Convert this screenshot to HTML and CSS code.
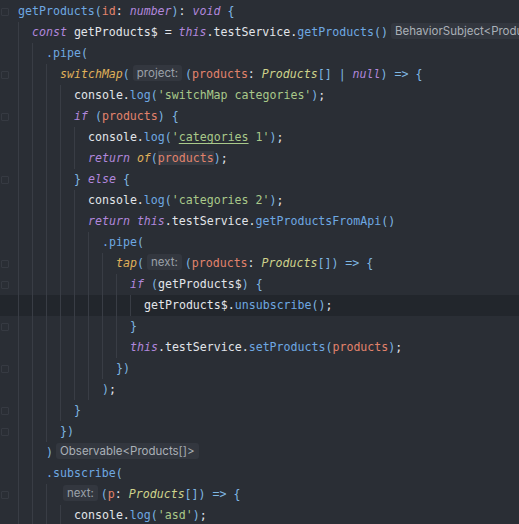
FILE: index.html
```html
<!DOCTYPE html>
<html lang="en">
<head>
    <meta charset="UTF-8">
    <title>product.component.ts</title>
    <link rel="stylesheet" href="styles.css">
</head>
<body>
    <div class="editor">
        <div class="line"><span class="gutter"><b class="fold"></b></span><span class="code"><span class="fn">getProducts</span><span class="br">(</span><span class="prm">id</span>: <span class="kw">number</span><span class="br">)</span>: <span class="kw">void</span> <span class="br">{</span></span></div>
        <div class="line"><span class="gutter"></span><i class="ind"></i><span class="code"><span class="kw">const</span> getProducts$ = <span class="kw">this</span>.testService.<span class="fn">getProducts</span><span class="br">()</span><span class="hint plain">BehaviorSubject&lt;Products[]&gt;</span></span></div>
        <div class="line"><span class="gutter"></span><i class="ind"></i><i class="ind"></i><span class="code"><span class="fn">.pipe</span><span class="br">(</span></span></div>
        <div class="line"><span class="gutter"><b class="fold"></b></span><i class="ind"></i><i class="ind"></i><i class="ind"></i><span class="code"><span class="call">switchMap</span><span class="br">(</span><span class="hint">project:</span><span class="br">(</span><span class="prm">products</span>: <span class="type">Products</span><span class="br">[]</span> <span class="op">|</span> <span class="kw">null</span><span class="br">)</span> <span class="op">=&gt;</span> <span class="br">{</span></span></div>
        <div class="line"><span class="gutter"></span><i class="ind"></i><i class="ind"></i><i class="ind"></i><i class="ind"></i><span class="code">console.<span class="fn">log</span><span class="br">(</span><span class="str">'switchMap categories'</span><span class="br">)</span>;</span></div>
        <div class="line"><span class="gutter"><b class="fold"></b></span><i class="ind"></i><i class="ind"></i><i class="ind"></i><i class="ind"></i><span class="code"><span class="kw">if</span> <span class="br">(</span><span class="prm">products</span><span class="br">)</span> <span class="br">{</span></span></div>
        <div class="line"><span class="gutter"></span><i class="ind"></i><i class="ind"></i><i class="ind"></i><i class="ind"></i><i class="ind"></i><span class="code">console.<span class="fn">log</span><span class="br">(</span><span class="str">'<u>categories</u> 1'</span><span class="br">)</span>;</span></div>
        <div class="line"><span class="gutter"></span><i class="ind"></i><i class="ind"></i><i class="ind"></i><i class="ind"></i><i class="ind"></i><span class="code"><span class="kw">return</span> <span class="call">of</span><span class="br">(</span><span class="prm mark">products</span><span class="br">)</span>;</span></div>
        <div class="line"><span class="gutter"><b class="fold"></b></span><i class="ind"></i><i class="ind"></i><i class="ind"></i><i class="ind"></i><span class="code"><span class="br">}</span> <span class="kw">else</span> <span class="br">{</span></span></div>
        <div class="line"><span class="gutter"></span><i class="ind"></i><i class="ind"></i><i class="ind"></i><i class="ind"></i><i class="ind"></i><span class="code">console.<span class="fn">log</span><span class="br">(</span><span class="str">'categories 2'</span><span class="br">)</span>;</span></div>
        <div class="line"><span class="gutter"></span><i class="ind"></i><i class="ind"></i><i class="ind"></i><i class="ind"></i><i class="ind"></i><span class="code"><span class="kw">return</span> <span class="kw">this</span>.testService.<span class="fn">getProductsFromApi</span><span class="br">()</span></span></div>
        <div class="line"><span class="gutter"></span><i class="ind"></i><i class="ind"></i><i class="ind"></i><i class="ind"></i><i class="ind"></i><i class="ind"></i><span class="code"><span class="fn">.pipe</span><span class="br">(</span></span></div>
        <div class="line"><span class="gutter"><b class="fold"></b></span><i class="ind"></i><i class="ind"></i><i class="ind"></i><i class="ind"></i><i class="ind"></i><i class="ind"></i><i class="ind"></i><span class="code"><span class="call">tap</span><span class="br">(</span><span class="hint">next:</span><span class="br">(</span><span class="prm">products</span>: <span class="type">Products</span><span class="br">[]</span><span class="br">)</span> <span class="op">=&gt;</span> <span class="br">{</span></span></div>
        <div class="line"><span class="gutter"><b class="fold"></b></span><i class="ind"></i><i class="ind"></i><i class="ind"></i><i class="ind"></i><i class="ind"></i><i class="ind"></i><i class="ind"></i><i class="ind"></i><span class="code"><span class="kw">if</span> <span class="br">(</span>getProducts$<span class="br">)</span> <span class="br">{</span></span></div>
        <div class="line current"><span class="gutter"></span><i class="ind"></i><i class="ind"></i><i class="ind"></i><i class="ind"></i><i class="ind"></i><i class="ind"></i><i class="ind"></i><i class="ind"></i><i class="ind"></i><span class="code">getProducts$.<span class="fn">unsubscribe</span><span class="br">()</span>;</span></div>
        <div class="line"><span class="gutter"><b class="fold"></b></span><i class="ind"></i><i class="ind"></i><i class="ind"></i><i class="ind"></i><i class="ind"></i><i class="ind"></i><i class="ind"></i><i class="ind"></i><span class="code"><span class="br">}</span></span></div>
        <div class="line"><span class="gutter"></span><i class="ind"></i><i class="ind"></i><i class="ind"></i><i class="ind"></i><i class="ind"></i><i class="ind"></i><i class="ind"></i><i class="ind"></i><span class="code"><span class="kw">this</span>.testService.<span class="fn">setProducts</span><span class="br">(</span><span class="prm">products</span><span class="br">)</span>;</span></div>
        <div class="line"><span class="gutter"><b class="fold"></b></span><i class="ind"></i><i class="ind"></i><i class="ind"></i><i class="ind"></i><i class="ind"></i><i class="ind"></i><i class="ind"></i><span class="code"><span class="br">})</span></span></div>
        <div class="line"><span class="gutter"></span><i class="ind"></i><i class="ind"></i><i class="ind"></i><i class="ind"></i><i class="ind"></i><i class="ind"></i><span class="code"><span class="br">)</span>;</span></div>
        <div class="line"><span class="gutter"><b class="fold"></b></span><i class="ind"></i><i class="ind"></i><i class="ind"></i><i class="ind"></i><span class="code"><span class="br">}</span></span></div>
        <div class="line"><span class="gutter"><b class="fold"></b></span><i class="ind"></i><i class="ind"></i><i class="ind"></i><span class="code"><span class="br">})</span></span></div>
        <div class="line"><span class="gutter"></span><i class="ind"></i><i class="ind"></i><span class="code"><span class="br">)</span><span class="hint plain">Observable&lt;Products[]&gt;</span></span></div>
        <div class="line"><span class="gutter"></span><i class="ind"></i><i class="ind"></i><span class="code"><span class="fn">.subscribe</span><span class="br">(</span></span></div>
        <div class="line"><span class="gutter"><b class="fold"></b></span><i class="ind"></i><i class="ind"></i><i class="ind"></i><span class="code"><span class="hint">next:</span><span class="br">(</span><span class="prm">p</span>: <span class="type">Products</span><span class="br">[]</span><span class="br">)</span> <span class="op">=&gt;</span> <span class="br">{</span></span></div>
        <div class="line"><span class="gutter"></span><i class="ind"></i><i class="ind"></i><i class="ind"></i><i class="ind"></i><span class="code">console.<span class="fn">log</span><span class="br">(</span><span class="str">'asd'</span><span class="br">)</span>;</span></div>
    </div>
</body>
</html>
```

FILE: styles.css
```css
body {
    margin: 0;
    background-color: #2a2e35;
    overflow: hidden;
}

.editor {
    width: 519px;
    height: 524px;
    padding-top: 1px;
    background-color: #2a2e35;
    font-family: 'DejaVu Sans Mono', monospace;
    font-size: 11.6px;
    color: #e2e5ea;
    overflow: hidden;
}

.line {
    display: flex;
    height: 21px;
    line-height: 21px;
    white-space: pre;
}

.line.current {
    background-color: #22262c;
}

.gutter {
    flex: 0 0 18px;
    position: relative;
}

.fold {
    position: absolute;
    left: 1px;
    top: 7px;
    width: 6px;
    height: 6px;
    border: 1px solid #363a42;
    border-radius: 1px;
}

.ind {
    flex: 0 0 14px;
    border-left: 1px solid #393d45;
    box-sizing: border-box;
}

.code {
    flex: 1;
    overflow: hidden;
}

.fn {
    color: #6ea8e2;
}

.kw {
    color: #b187dc;
    font-style: italic;
}

.prm {
    color: #e2836c;
}

.call {
    color: #e0b25a;
    font-style: italic;
}

.type {
    color: #cfd38c;
    font-style: italic;
}

.str {
    color: #a9c98a;
}

.str u {
    text-decoration-color: #a9c98a;
    text-underline-offset: 2px;
}

.br {
    color: #7fb7e3;
}

.op {
    color: #7fb7e3;
}

.mark {
    background-color: #363b43;
}

.hint {
    display: inline-block;
    margin: 0 3px;
    font-family: 'Inter', 'Noto Sans', sans-serif;
    font-size: 11.5px;
    line-height: 16px;
    color: #9ba1a9;
    background-color: #33373f;
    border-radius: 3px;
    padding: 0 4px;
    vertical-align: 1px;
}

.hint.plain {
    color: #aab0b7;
}
```
